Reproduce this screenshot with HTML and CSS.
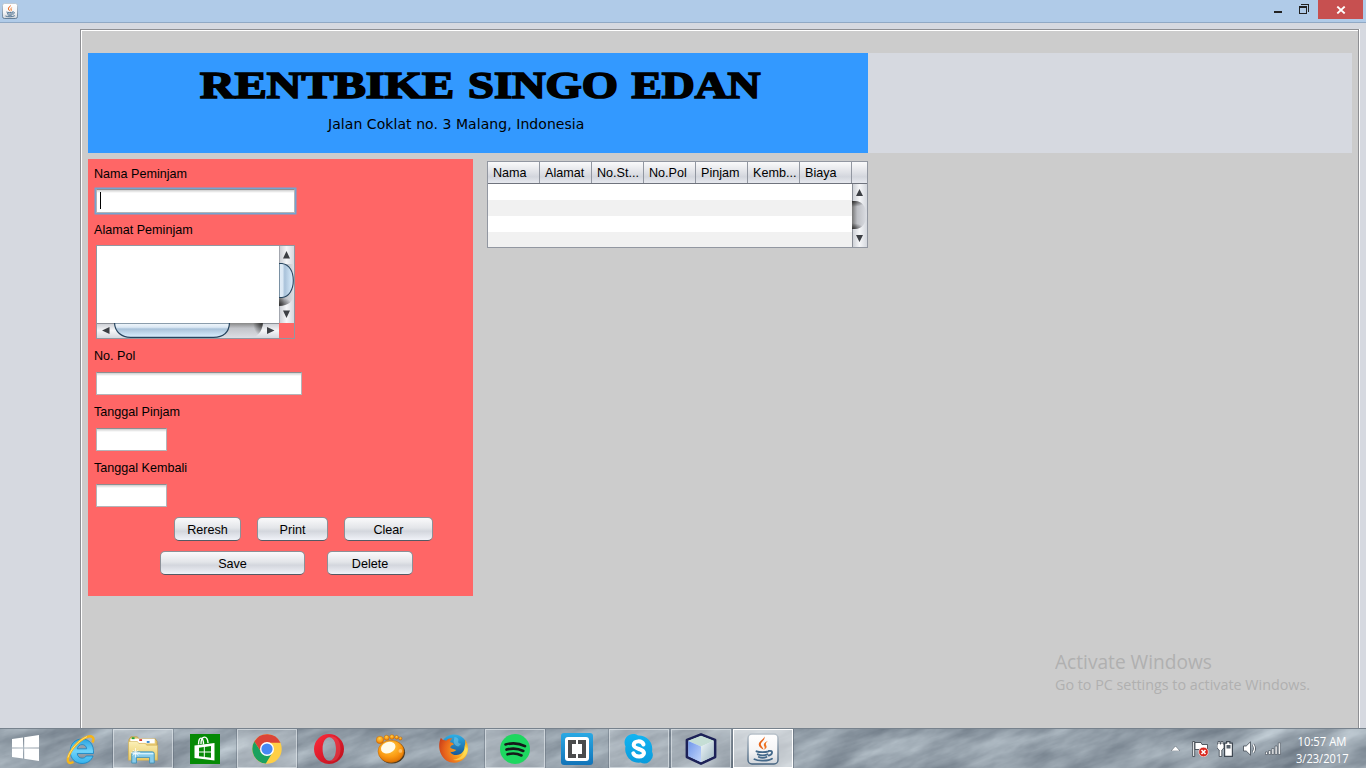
FILE: index.html
```html
<!DOCTYPE html>
<html lang="id">
<head>
<meta charset="utf-8">
<title>Rentbike Singo Edan</title>
<link rel="stylesheet" href="styles.css">
</head>
<body>
<svg class="defs" width="0" height="0">
  <defs>
    <linearGradient id="gTile" x1="0" y1="0" x2="0" y2="1"><stop offset="0" stop-color="#fff"/><stop offset=".6" stop-color="#f4f4f5"/><stop offset="1" stop-color="#cfd4da"/></linearGradient>
    <linearGradient id="gEdge" x1="0" y1="0" x2="0" y2="1"><stop offset="0" stop-color="#b9c2ca"/><stop offset="1" stop-color="#45637f"/></linearGradient>
    <linearGradient id="gIe" x1="0" y1="0" x2="0" y2="1"><stop offset="0" stop-color="#2ba3df"/><stop offset=".5" stop-color="#6fd3fa"/><stop offset="1" stop-color="#35b1ec"/></linearGradient>
    <linearGradient id="gFolder" x1="0" y1="0" x2="0" y2="1"><stop offset="0" stop-color="#fbf0b8"/><stop offset="1" stop-color="#e9c964"/></linearGradient>
    <linearGradient id="gOpera" x1="0" y1="0" x2="1" y2="1"><stop offset="0" stop-color="#ff2a3c"/><stop offset="1" stop-color="#b90f1b"/></linearGradient>
    <radialGradient id="gGom" cx=".45" cy=".3" r=".75"><stop offset="0" stop-color="#ffd24a"/><stop offset=".6" stop-color="#fb9a12"/><stop offset="1" stop-color="#d96a00"/></radialGradient>
    <radialGradient id="gFox" cx=".9" cy=".5" r=".95"><stop offset="0" stop-color="#ffe24a"/><stop offset=".35" stop-color="#f9a11f"/><stop offset=".75" stop-color="#e8641b"/><stop offset="1" stop-color="#c9401a"/></radialGradient>
    <linearGradient id="gGlobe" x1="0" y1="0" x2="0" y2="1"><stop offset="0" stop-color="#2fb0e6"/><stop offset="1" stop-color="#123c80"/></linearGradient>
    <linearGradient id="gBr" x1="0" y1="0" x2="0" y2="1"><stop offset="0" stop-color="#2aa9e4"/><stop offset="1" stop-color="#1173b8"/></linearGradient>
    <linearGradient id="gSky" x1="0" y1="0" x2="0" y2="1"><stop offset="0" stop-color="#12b4f2"/><stop offset="1" stop-color="#0a9bdc"/></linearGradient>
    <linearGradient id="gCubeL" x1="0" y1="0" x2="1" y2="1"><stop offset="0" stop-color="#6f96ea"/><stop offset="1" stop-color="#c3d6fb"/></linearGradient>
    <linearGradient id="gCubeR" x1="0" y1="0" x2="1" y2="1"><stop offset="0" stop-color="#eef6f8"/><stop offset="1" stop-color="#9fb7c2"/></linearGradient>
    <symbol id="java" viewBox="0 0 32 32">
      <rect x="1" y="1" width="30" height="30" rx="4" fill="url(#gTile)" stroke="url(#gEdge)" stroke-width="1.500"/>
      <path d="M17.300 3.500c1.600 3.400-4.200 5.500-3.400 8.300.5 1.600 2 2.700 2.700 5-3.900-2.300-5.900-4.500-4.300-7.300 1.300-2.200 4.600-3.500 5-6z" fill="#e8651a"/>
      <path d="M21 7.800c-2.700 1.300-4.800 2.900-4 5 .5 1.200 1.400 2-.1 4 2.600-1.300 3.200-2.600 2.400-4-.9-1.900-.5-3 1.700-5z" fill="#ef7422"/>
      <path d="M9.500 18.300c2.800 1.200 9 1.100 12 0M10.800 21.300c2.700 1.100 7 1.100 9.700 0M11.800 24c2.400 1 5.500 1 7.700 0M7.500 26.300c3.500 2 14 1.800 17.500-.6M21.800 17.900c4.500-.8 4.200 3.400 0 4.700" fill="none" stroke="#44698a" stroke-width="1.800" stroke-linecap="round"/>
    </symbol>
    <filter id="marble" x="0" y="0" width="1" height="1" color-interpolation-filters="sRGB">
      <feTurbulence type="fractalNoise" baseFrequency=".014 .05" numOctaves="5" seed="12"/>
      <feColorMatrix values=".42 0 0 0 .37  .42 0 0 0 .415  .40 0 0 0 .465  0 0 0 0 1"/>
    </filter>
  </defs>
</svg>

<header class="titlebar">
  <svg class="app-icon" width="16" height="16"><use href="#java" width="16" height="16"/></svg>
  <div class="win-controls">
    <svg class="win-min" width="8" height="2"><rect width="8" height="2" fill="#222"/></svg>
    <svg class="win-max" width="10" height="10" shape-rendering="crispEdges"><path d="M0 2h8v8H0zM1 4v5h6V4z" fill="#222" fill-rule="evenodd"/><path d="M2 0h8v8H9V1H2z" fill="#222"/></svg>
    <div class="win-close"><svg width="10" height="8"><path d="M1.300.6 8.700 7.400M8.700.6 1.300 7.400" stroke="#fff" stroke-width="1.900"/></svg></div>
  </div>
</header>

<main class="desktop">
  <section class="frame">
    <div class="banner">
      <div class="banner-blue">
        <svg class="banner-title" width="780" height="50">
          <text x="112" y="45" textLength="254" lengthAdjust="spacingAndGlyphs">RENTBIKE</text>
          <text x="380" y="45" textLength="150" lengthAdjust="spacingAndGlyphs">SINGO</text>
          <text x="543.500" y="45" textLength="129" lengthAdjust="spacingAndGlyphs">EDAN</text>
        </svg>
        <p class="banner-sub">Jalan Coklat no. 3 Malang, Indonesia</p>
      </div>
    </div>
    <div class="content">
      <form class="form">
        <label>Nama Peminjam</label>
        <div class="field field-focus"><i class="caret"></i></div>
        <label>Alamat Peminjam</label>
        <div class="textarea">
          <div class="ta-body"></div>
          <svg class="sb" width="15" height="77">
            <defs>
              <linearGradient id="sbV"><stop offset="0" stop-color="#c9ccd2"/><stop offset=".5" stop-color="#f5f6f8"/><stop offset="1" stop-color="#d5d8de"/></linearGradient>
              <linearGradient id="sbH" x1="0" y1="0" x2="0" y2="1"><stop offset="0" stop-color="#c9ccd2"/><stop offset=".5" stop-color="#f5f6f8"/><stop offset="1" stop-color="#d5d8de"/></linearGradient>
              <linearGradient id="thV"><stop offset="0" stop-color="#e2edf7"/><stop offset=".25" stop-color="#dbe8f4"/><stop offset=".4" stop-color="#a9c2da"/><stop offset="1" stop-color="#dcf0ff"/></linearGradient>
              <linearGradient id="thH" x1="0" y1="0" x2="0" y2="1"><stop offset="0" stop-color="#f3f8fc"/><stop offset=".3" stop-color="#dbe8f4"/><stop offset=".42" stop-color="#a9c2da"/><stop offset="1" stop-color="#dcf0ff"/></linearGradient>
              <linearGradient id="trk"><stop offset="0" stop-color="#777"/><stop offset=".35" stop-color="#bdbfc4"/><stop offset="1" stop-color="#dcdee4"/></linearGradient>
              <linearGradient id="trkH" x1="0" y1="0" x2="0" y2="1"><stop offset="0" stop-color="#888"/><stop offset=".35" stop-color="#c3c5ca"/><stop offset="1" stop-color="#dcdee4"/></linearGradient>
              <radialGradient id="shade"><stop offset="0" stop-color="#222" stop-opacity=".85"/><stop offset="1" stop-color="#222" stop-opacity="0"/></radialGradient>
              <clipPath id="clipV"><path d="M0 18h15v30c0 7-6 12-15 12z"/></clipPath>
              <clipPath id="clipH"><path d="M120 0h46c-1 9-6 15-14 15h-32z"/></clipPath>
              <clipPath id="clipT"><path d="M0 17h3c7 0 10 5 12 13v2c-2 8-5 13-12 13H0z"/></clipPath>
            </defs>
            <rect width="15" height="77" fill="url(#sbV)"/>
            <path d="M.5 0v77" stroke="#a3a7af"/>
            <g clip-path="url(#clipV)"><rect y="18" width="15" height="44" fill="url(#trk)"/><ellipse cx="0" cy="59" rx="13" ry="8" fill="url(#shade)"/></g>
            <path d="M0 17.500h3c7.500 1 11.300 8 11.300 17S10 51 3 51.500H0z" fill="url(#thV)" stroke="#27455f" stroke-width="1.100"/>
            <path d="M4 12.500 7.500 5 11 12.500zM4 64.500h7L7.500 72z" fill="#3c3f44"/>
          </svg>
          <svg class="sb" width="182" height="15">
            <rect width="182" height="15" fill="url(#sbH)"/>
            <path d="M0 .5h182" stroke="#8c9097"/>
            <g clip-path="url(#clipH)"><rect x="120" width="46" height="15" fill="url(#trkH)"/><ellipse cx="165" cy="0" rx="9" ry="13" fill="url(#shade)"/></g>
            <path d="M17.500 0c.5 9 7 14.300 16 14.300h83c10 0 15.500-5.300 16-14.300z" fill="url(#thH)" stroke="#27455f" stroke-width="1.200"/>
            <path d="M12.500 4v7L5 7.500zM170 4v7l7.500-3.500z" fill="#3c3f44"/>
          </svg>
          <div class="ta-corner"></div>
        </div>
        <label>No. Pol</label>
        <div class="field field-pol"></div>
        <label>Tanggal Pinjam</label>
        <div class="field field-date"></div>
        <label>Tanggal Kembali</label>
        <div class="field field-date"></div>
        <div class="buttons buttons-top">
          <button type="button" class="btn btn-refresh">Reresh</button>
          <button type="button" class="btn btn-print">Print</button>
          <button type="button" class="btn btn-clear">Clear</button>
        </div>
        <div class="buttons buttons-bottom">
          <button type="button" class="btn btn-save">Save</button>
          <button type="button" class="btn btn-delete">Delete</button>
        </div>
      </form>
      <div class="table">
        <div class="thead">
          <span>Nama</span><span>Alamat</span><span>No.St...</span><span>No.Pol</span><span>Pinjam</span><span>Kemb...</span><span>Biaya</span>
        </div>
        <div class="tbody">
          <div class="rows"><div></div><div></div><div></div><div></div></div>
          <svg width="15" height="63">
            <rect width="15" height="63" fill="url(#sbV)"/>
            <path d="M.5 0v63" stroke="#8a8e96"/>
            <g clip-path="url(#clipT)"><rect y="17" width="15" height="28" fill="url(#trk)"/><ellipse cx="0" cy="17" rx="14" ry="6" fill="url(#shade)"/><ellipse cx="0" cy="45" rx="12" ry="6" fill="url(#shade)"/></g>
            <path d="M4 12 7.500 5 11 12zM4 51h7l-3.500 7z" fill="#3c3f44"/>
          </svg>
        </div>
      </div>
    </div>
  </section>
  <svg class="watermark" width="280" height="50">
    <text x="0" y="21" font-size="19.500" textLength="157" lengthAdjust="spacingAndGlyphs">Activate Windows</text>
    <text x="0" y="41.500" font-size="14.500" textLength="255" lengthAdjust="spacingAndGlyphs">Go to PC settings to activate Windows.</text>
  </svg>
</main>

<footer class="taskbar">
  <svg class="taskbar-bg" width="1366" height="40"><g transform="rotate(-20 683 20)"><rect x="-60" y="-260" width="1490" height="560" filter="url(#marble)"/></g></svg>
  <div class="start"><svg width="27" height="26"><path d="M0 4 11 2.500V12.400H0zM12.200 2.300 27 0v12.400H12.200zM0 13.600h11v9.900L0 22zM12.200 13.600H27V26l-14.800-2.200z" fill="#fff"/></svg></div>
  <div class="apps">
    <div class="slot"><svg width="32" height="32" viewBox="0 0 32 32">
      <path d="M28.500 20.500H12.200c.3 3 2.300 4.700 4.900 4.700 1.900 0 3.300-.8 4.200-2.200h6.700c-1.600 4.700-5.800 7.500-11 7.500C10.200 30.500 5.200 25.500 5.200 18.300 5.200 11 10.200 6 17 6c7.500 0 12 5.300 11.500 14.500zM12.300 15.800h9.400c-.3-2.600-2-4.200-4.600-4.200-2.500 0-4.300 1.600-4.800 4.200z" fill="url(#gIe)" stroke="#1384c4" stroke-width=".8"/>
      <path d="M27.500 9.500c2.500-5-.5-7.500-6-5.300C13 7.600 5 17.500 3.200 24.500c-1.300 4.500.8 6.700 5.300 4.500" fill="none" stroke="#f5b51a" stroke-width="2.500"/>
      <path d="M22 3.600C13 7.600 5 17.500 3 24.500" fill="none" stroke="#ffe27c" stroke-width="1"/>
    </svg></div>
    <div class="slot slot-open"><svg width="32" height="30" viewBox="0 0 34 32">
      <path d="M2 6 4 3h7l1.500 2H30l2 3v19H2z" fill="#e6c870" stroke="#bb953b" stroke-width=".7"/>
      <path d="M3.500 5h26v5h-26z" fill="#fff"/><path d="M5 3.500h3v2H5z" fill="#1ea33a"/><path d="M13 5.500h3v2h-3z" fill="#d33b2b"/><path d="M21 7.500h3v2h-3z" fill="#3785d1"/>
      <path d="M1.500 8H11l1.500 2h7l1.500 2h11.500v16h-31z" fill="url(#gFolder)" stroke="#d0ad51" stroke-width=".6"/>
      <path d="M5 31V21q0-2 2-2h20q2 0 2 2v10h-5v-6H10v6z" fill="#87cbea" stroke="#3d8fb6" stroke-width=".9"/>
      <path d="M6 21h22" stroke="#d4f2ff" stroke-width="1.500"/><path d="M9 15v10M4 20h10M6 17l6 6M12 17l-6 6" stroke="#fff" stroke-width="1" opacity=".8"/>
    </svg></div>
    <div class="slot"><svg width="30" height="30"><rect width="30" height="30" fill="#058a05"/><path d="M4.500 11.500 24.500 9v17.500L4.500 24z" fill="#fff"/><path d="M8.500 10.500c0-9 5-8 5 0M11 10C11 1 18 1 18 9" fill="none" stroke="#fff" stroke-width="1.400"/><path d="M9 13.700 13.800 13v4.500H9zM14.800 12.900 21 12v5.500h-6.200zM9 18.500h4.800v4.300L9 22.200zM14.800 18.500H21v5.300l-6.200-.9z" fill="#058a05"/></svg></div>
    <div class="slot slot-open"><svg width="30" height="30" viewBox="-15 -15 30 30">
      <circle r="14.700" fill="#ffcf45"/><path d="M-12.700-7.400A14.700 14.700 0 0 1 13.500-6.200H0L-5.500 3.500z" fill="#dc4437"/><path d="M-12.700-7.400A14.700 14.700 0 0 0-1.200 14.600L5.500 3.500-5.500 3.500z" fill="#1aa15f"/><circle r="7" fill="#fff"/><circle r="5.600" fill="#4688f4"/>
    </svg></div>
    <div class="slot"><svg width="30" height="30" viewBox="0 0 30 30"><path fill-rule="evenodd" d="M15 0a15 15 0 1 0 0 30a15 15 0 1 0 0-30zM15.300 3.200c4 0 6.700 5 6.700 11.800s-2.700 11.800-6.700 11.800S8.600 21.800 8.600 15s2.700-11.800 6.700-11.800z" fill="url(#gOpera)"/><path d="M15.300 3.200C20 1 26.500 5 26.500 15s-6.500 14-11.200 11.800c4 0 6.700-5 6.700-11.800S19.300 3.200 15.300 3.200z" fill="#f4606b" opacity=".35"/></svg></div>
    <div class="slot"><svg width="30" height="32" viewBox="0 0 32 32">
      <ellipse cx="17" cy="19.500" rx="14" ry="12" fill="#4b3a20"/><ellipse cx="16" cy="18.500" rx="13.800" ry="11.800" fill="url(#gGom)" stroke="#c96b08" stroke-width=".6"/>
      <g fill="url(#gGom)" stroke="#c46400" stroke-width=".5"><circle cx="4.200" cy="6.300" r="3.900"/><circle cx="11.300" cy="4" r="2.700"/><circle cx="17" cy="3.200" r="2.500"/><circle cx="22" cy="3.500" r="2"/><circle cx="26" cy="4.800" r="1.700"/></g>
      <ellipse cx="13" cy="14.500" rx="8" ry="6" fill="#fffbea" transform="rotate(-22 13 14.500)"/><circle cx="26" cy="18" r="2" fill="#ffd6a0" opacity=".6"/>
    </svg></div>
    <div class="slot"><svg width="31" height="31" viewBox="0 0 32 32">
      <circle cx="16.500" cy="15.500" r="14" fill="url(#gGlobe)"/><path d="M17 4q5 1 4 4t3 3l-3 3q-4-1-5-5z" fill="#7ed0f0" opacity=".5"/>
      <path d="M3 5c-2.500 5-2.300 12 .2 17 3 6 8 8.700 13.300 8.700C25.500 30.700 31 23.500 31 16c0-4-1.200-7-3.300-9.300.7 3 .5 5-.2 6.800.3 5-3.500 9.300-8.500 9.300-3 0-5.500-1.300-6.300-3.500 2 .6 4 .2 6.300-1.700-2.600-.5-4.500-1.200-6.300-2.600.2-2 1.500-2.500 3.700-3.200-.9-1.400-2.300-2.200-4-2.200.2-2 1-3.200 2.600-4.200-2.700-.3-4.700.5-6.300 2.300C6.600 7.500 4.500 7.500 3 5z" fill="url(#gFox)"/>
      <path d="M27.500 14c1 7-4 13-12 13.500 9 2.500 15-4 15-11" fill="#ffe45c" opacity=".65"/>
    </svg></div>
    <div class="slot slot-open"><svg width="30" height="30"><circle cx="15" cy="15" r="15" fill="#1ed760"/><path d="M5.500 10.500Q16 7.500 25 12.200M6.500 15.600Q15.500 13 23.300 17M7.500 20.300Q15 18.200 21.500 21.500" fill="none" stroke="#15191a" stroke-width="2.600" stroke-linecap="round"/></svg></div>
    <div class="slot"><svg width="32" height="32"><rect width="32" height="32" rx="3" fill="url(#gBr)"/><rect x="4" y="4" width="24" height="24" rx="3" fill="#fff"/><path d="M7 7h8v4h-4v10h4v4H7zM25 7h-8v4h4v10h-4v4h8z" fill="#4a4b4c"/></svg></div>
    <div class="slot slot-open"><svg width="30" height="30" viewBox="0 0 30 30"><path d="M9 0c2 0 3.500.5 5 1.400A13.500 13.500 0 0 1 28 17.500 8.500 8.500 0 0 1 16.500 28.600 13.500 13.500 0 0 1 1.500 12.500C-1.500 6.500 3 0 9 0z" fill="url(#gSky)"/><path d="M19.500 10.500C18 6 9.500 6.500 9.700 11c.2 4.500 10.300 3.500 10.300 8 0 4.500-9 4.700-10.700.3" fill="none" stroke="#fff" stroke-width="4" stroke-linecap="round"/></svg></div>
    <div class="slot slot-open"><svg width="32" height="32" viewBox="0 0 32 32"><path d="M16 1.500 30 7v17L16 30.500 2 24V7z" fill="#e9f1f5" stroke="#1c2157" stroke-width="2.800" stroke-linejoin="round"/><path d="M16 2.700 29 7.800 16 13.500 3 7.800z" fill="#c5ded5"/><path d="M3.300 8 16 13.500v15.800L3.300 23.300z" fill="url(#gCubeL)"/><path d="M28.700 8 16 13.500v15.800l12.700-6z" fill="url(#gCubeR)"/></svg></div>
    <div class="slot slot-active"><svg width="32" height="32"><use href="#java" width="32" height="32"/></svg></div>
  </div>
  <div class="tray">
    <svg width="9" height="5"><path d="M0 5 4.500 0 9 5z" fill="#fff" stroke="#4d5660" stroke-width=".5"/></svg>
    <svg class="tray-flag" width="17" height="16"><path d="M.7.5h2V15.500h-2z" fill="#fff" stroke="#333b44" stroke-width=".8"/><path d="M3 1.500h6l1 2h5.500v7H9l-1-2H3z" fill="#fff" stroke="#333b44" stroke-width=".8"/><circle cx="11.500" cy="11" r="4.800" fill="#d9281f" stroke="#fff" stroke-width=".6"/><path d="m9.500 9 4 4m0-4-4 4" stroke="#fff" stroke-width="1.600"/></svg>
    <svg class="tray-battery" width="16" height="16"><path d="M7 1.500h2V0h4.500v1.500H16V16H7z" fill="#3f4852"/><path d="M8.200 2.700h2V1.200h2.100v1.500h2.500v12.100H8.200z" fill="#fff"/><path d="M9.500 4h4v3.500h-4z" fill="#59636d"/><path d="M0 3h1V.5h2V3h1V.5h2V3h1v4L4.800 9v6.500H2.200V9L0 7z" fill="#fff" stroke="#3f4852" stroke-width=".8"/></svg>
    <svg class="tray-volume" width="14" height="15"><path d="M.5 5h2.700L7.500.8v13.400L3.200 10H.5z" fill="#fff" stroke="#3f4852" stroke-width=".8"/><path d="M10 3.500q3 4 0 8" fill="none" stroke="#3f4852" stroke-width="2.600"/><path d="M10 3.500q3 4 0 8" fill="none" stroke="#fff" stroke-width="1.400"/></svg>
    <svg class="tray-signal" width="16" height="13"><path d="M.5 10h2v2.500h-2zM3.700 8.500h2v4h-2zM6.900 6.500h2v6h-2zM10.100 4h2v8.500h-2zM13.300.8h2v11.700h-2z" fill="#fff" stroke="#3f4852" stroke-width=".6"/></svg>
    <svg class="clock" width="60" height="38"><text x="6.500" y="16" textLength="49" lengthAdjust="spacingAndGlyphs">10:57 AM</text><text x="5" y="33" textLength="52.500" lengthAdjust="spacingAndGlyphs">3/23/2017</text></svg>
  </div>
</footer>
</body>
</html>
```
FILE: styles.css
```css
* { box-sizing: border-box; }
body {
  margin: 0;
  width: 1366px;
  height: 768px;
  overflow: hidden;
  display: flex;
  flex-direction: column;
  background: #d6d9e0;
  color: #000;
  font: 12.6px "Liberation Sans", Arial, sans-serif;
}
svg { display: block; flex: none; }
.defs { position: absolute; }

.titlebar {
  height: 23px;
  flex: none;
  display: flex;
  justify-content: space-between;
  align-items: flex-start;
  background: #b0cbe8;
  border-bottom: 1px solid #90a9c5;
  padding: 0 3px 0 2px;
}
.app-icon { margin-top: 3px; }
.win-controls { display: flex; align-items: flex-start; }
.win-min { margin: 11px 17px 0 0; }
.win-max { margin: 4px 9px 0 0; }
.win-close {
  width: 45px;
  height: 19px;
  display: flex;
  align-items: center;
  justify-content: center;
  background: #c75050;
}

.desktop { position: relative; flex: none; height: 705px; padding: 6px 6px 0 80px; }
.frame {
  width: 1279px;
  height: 699px;
  padding: 23px 6px 0 7px;
  border: 1px solid #8e8f93;
  border-bottom: 0;
  box-shadow: inset 1px 1px 0 #fff, 1px 0 0 #fff;
  background: #ccc;
}
.banner { height: 100px; width: 1264px; background: #d6d9e0; }
.banner-blue { width: 780px; height: 100px; background: #39f; }
.banner-title {
  overflow: visible;
  font: bold 38px "Liberation Serif", "Times New Roman", serif;
  stroke: #000;
  stroke-width: 1.7px;
}
.banner-sub {
  margin: 12px 0 0 240px;
  font: 14px/18px "DejaVu Sans", Verdana, sans-serif;
  letter-spacing: .06px;
  white-space: nowrap;
}

.content { display: flex; gap: 14px; padding-top: 6px; align-items: flex-start; }
.form { width: 385px; height: 437px; padding-left: 6px; background: #f66; }
.form label { display: block; height: 29px; line-height: 30px; white-space: nowrap; }
.field {
  margin-left: 2px;
  height: 23px;
  background: linear-gradient(#cfcfcf, #fff 3px);
  border: 1px solid #b4b4b8;
  border-top-color: #8d8e90;
}
.field-focus {
  width: 199px;
  height: 24px;
  margin: 1px 0 2px 2px;
  padding: 2px 0 0 3px;
  box-shadow: 0 0 0 1.5px #73a4d1;
}
.caret { display: block; width: 1px; height: 17px; background: #000; }
.textarea {
  width: 199px;
  height: 94px;
  margin: 1px 0 2px 2px;
  display: grid;
  grid-template: 77px 15px / 182px 15px;
  border: 1px solid #9297a1;
}
.ta-body { background: #fff; }
.field-pol, .field-date { margin-top: 2px; margin-bottom: 2px; }
.field-pol { width: 206px; }
.field-date { width: 71px; }

.buttons { display: flex; height: 24px; }
.buttons-top { padding-left: 80px; gap: 16px; margin-top: 10px; }
.buttons-bottom { padding-left: 66px; gap: 22px; margin-top: 10px; }
.btn {
  height: 24px;
  padding: 1px 0 0;
  font: inherit;
  border: 1px solid #8c9097;
  border-bottom-color: #555a64;
  border-radius: 5px;
  background: linear-gradient(#fafafb, #e3e5e9 45%, #d3d6dd 60%, #f0f2f8);
}
.buttons-top { position: relative; }
.btn-refresh { width: 67px; }
.btn-print { width: 71px; }
.btn-clear { width: 89px; }
.btn-save { width: 145px; }
.btn-delete { width: 86px; }

.table { width: 381px; height: 87px; margin-top: 2px; border: 1px solid #9297a1; }
.thead {
  height: 22px;
  display: flex;
  background: linear-gradient(#fafafb, #dfe1e6 50%, #d3d6dd 70%, #e6e8ee);
  border-bottom: 1px solid #6f737d;
}
.thead span { width: 52px; padding-left: 5px; line-height: 22px; border-right: 1px solid #9297a1; white-space: nowrap; }
.tbody { display: flex; height: 63px; overflow: hidden; }
.rows { width: 364px; }
.rows div { height: 16px; background: #fff; }
.rows div:nth-child(even) { background: #f1f1f1; }

.watermark { position: absolute; left: 1055px; top: 625px; font-family: "Open Sans", "Noto Sans", sans-serif; fill: #b0b0b0; }

.taskbar {
  position: relative;
  flex: none;
  height: 40px;
  display: flex;
  overflow: hidden;
  background: #93a1ad;
  border-top: 1px solid #77828d;
}
.taskbar-bg { position: absolute; inset: 0; }
.start, .apps, .tray { position: relative; }
.start { width: 51px; padding: 6px 0 0 12px; }
.apps { display: flex; gap: 2px; }
.slot { width: 60px; height: 39px; display: flex; align-items: center; justify-content: center; }
.slot-open {
  border: 1px solid rgba(225, 230, 235, .65);
  background: rgba(255, 255, 255, .18);
  outline: 1px solid rgba(80, 92, 105, .35);
}
.slot-active {
  border: 1px solid #fff;
  background: rgba(255, 255, 255, .5);
  outline: 1px solid rgba(80, 92, 105, .5);
}
.tray { display: flex; align-items: center; margin-left: 378px; }
.tray-flag { margin-left: 12px; }
.tray-battery { margin-left: 8px; }
.tray-volume { margin-left: 10px; }
.tray-signal { margin-left: 8px; }
.clock { margin-left: 10px; font: 12px "Open Sans", "Noto Sans", sans-serif; fill: #fff; }
```
